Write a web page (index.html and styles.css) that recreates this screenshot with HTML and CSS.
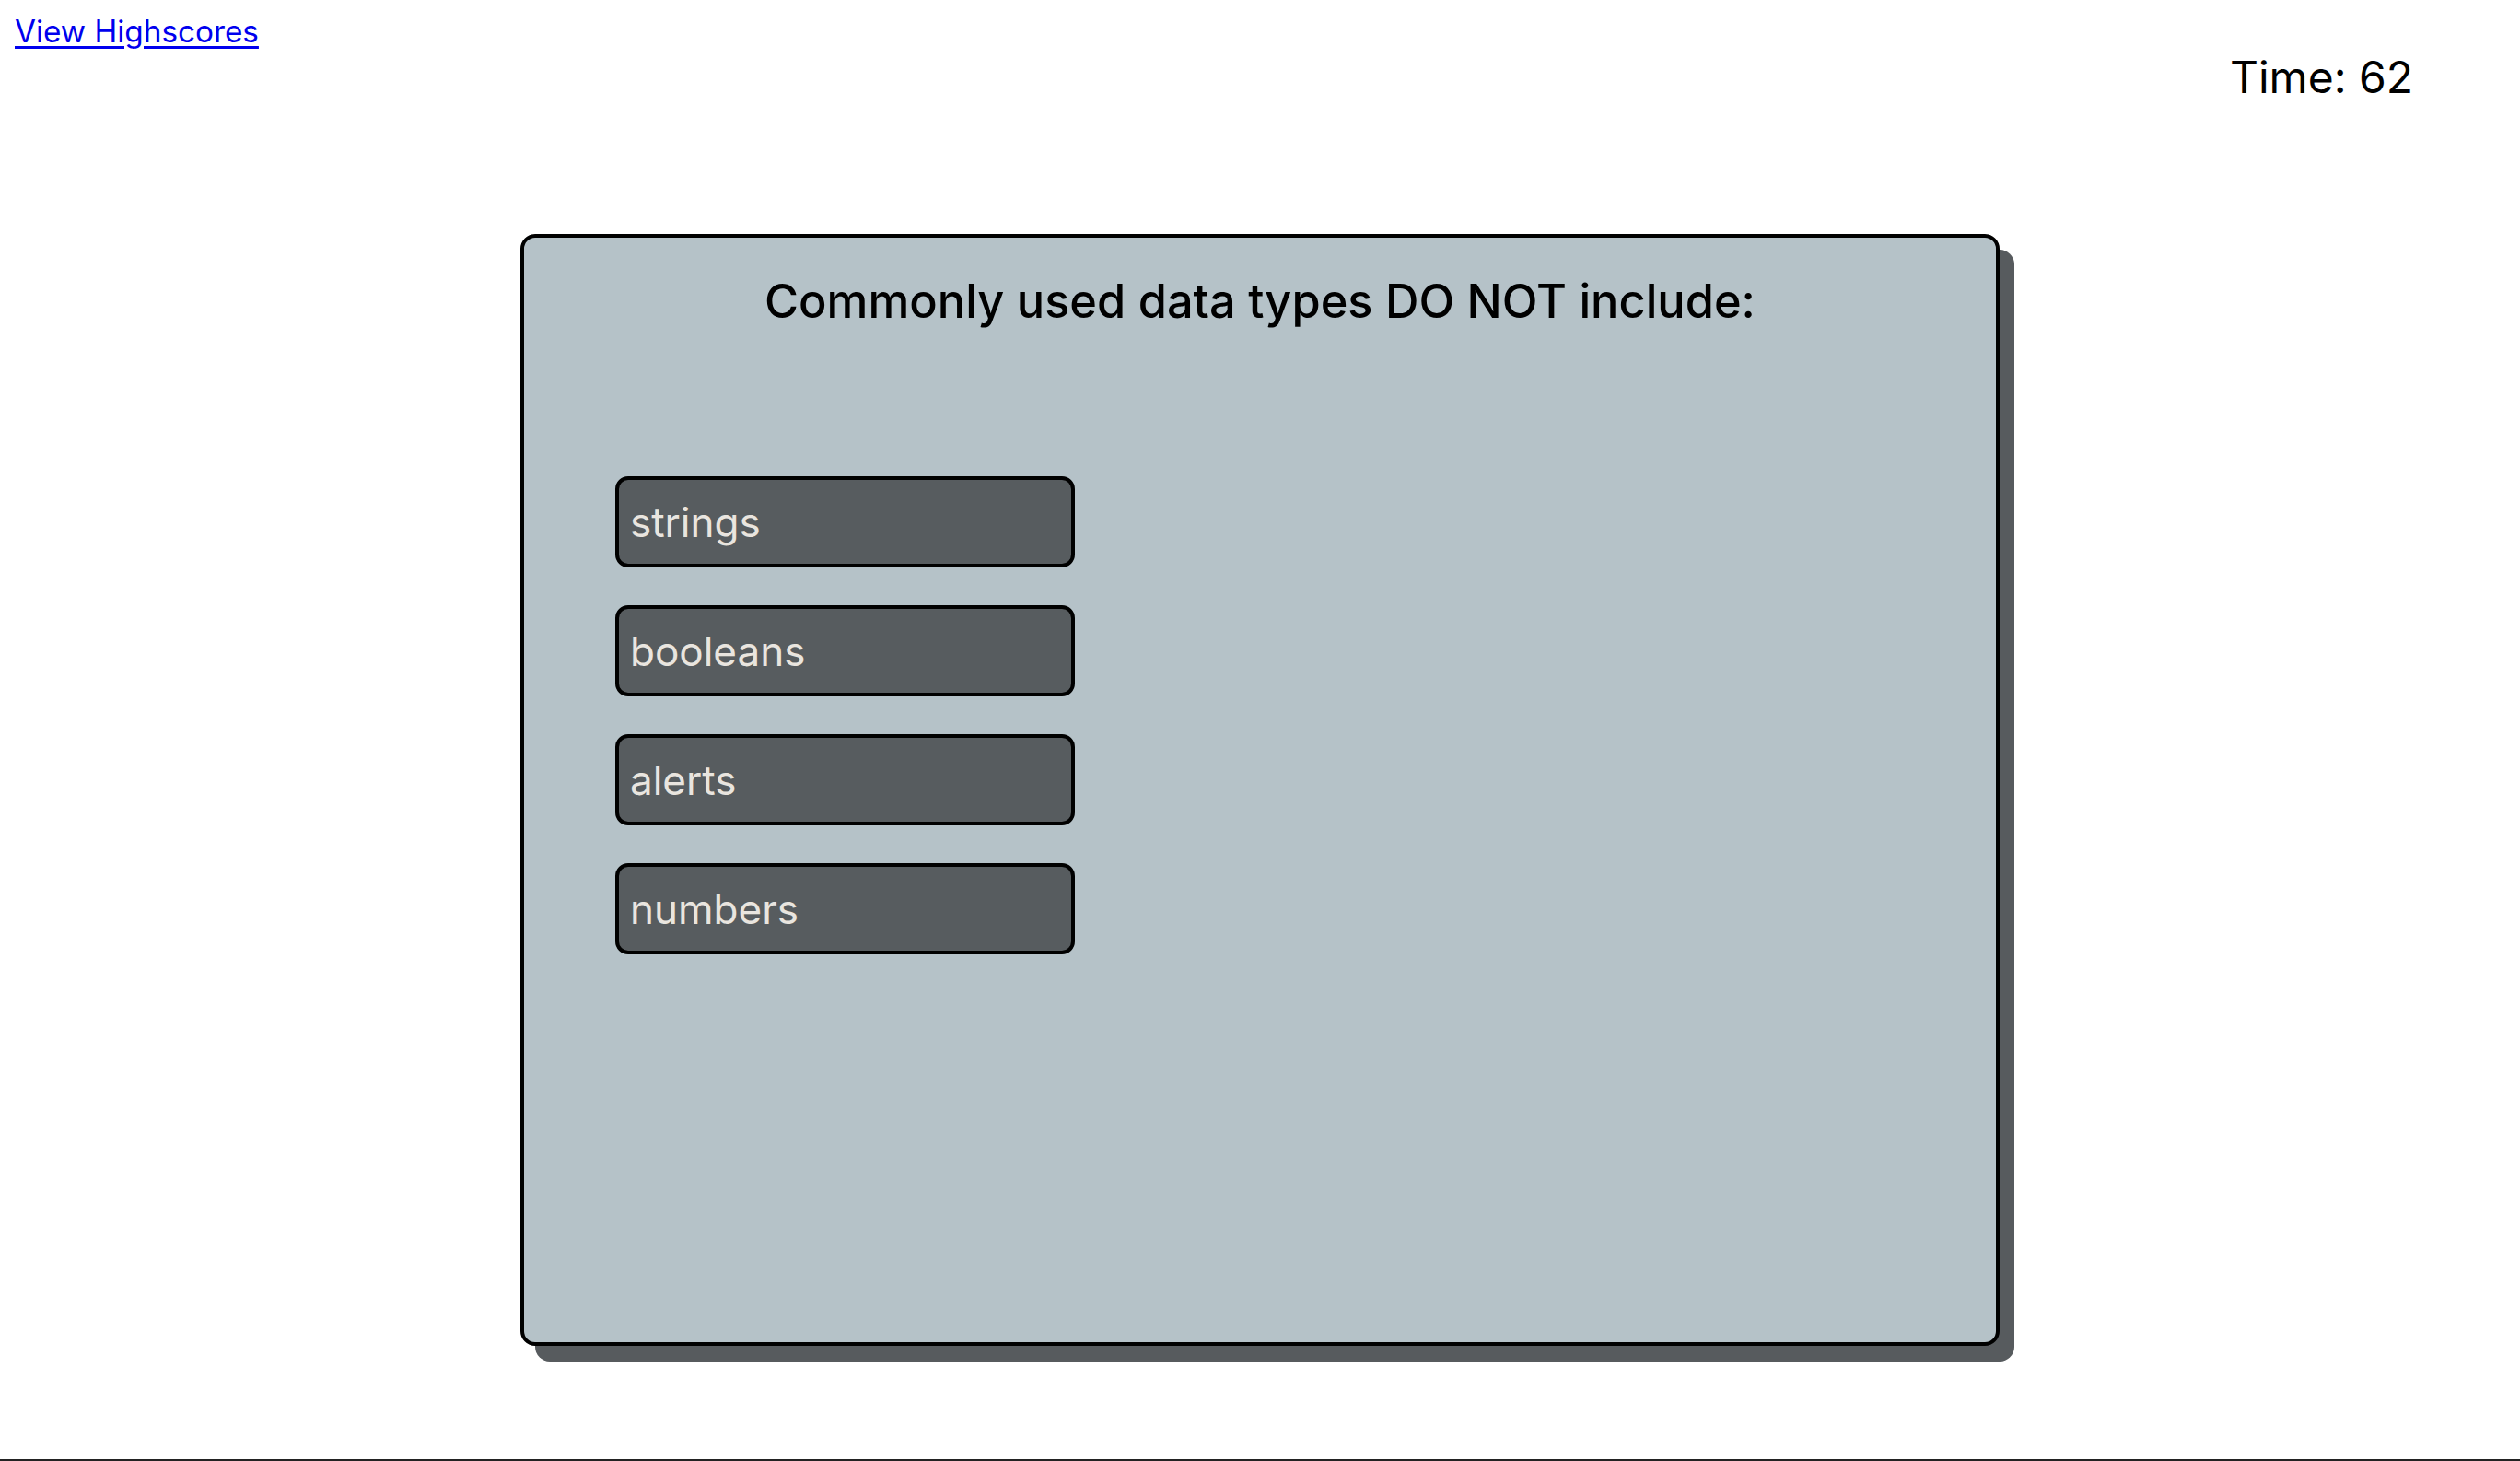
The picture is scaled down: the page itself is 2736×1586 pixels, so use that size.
FILE: index.html
```html
<!DOCTYPE html>
<html lang="en">
<head>
<meta charset="utf-8">
<title>Code Quiz</title>
<link rel="stylesheet" href="styles.css">
</head>
<body>
<div class="page">
  <header class="top">
    <a class="highscores" href="#">View Highscores</a>
    <div class="timer">Time: 62</div>
  </header>
  <main class="card">
    <h1 class="question">Commonly used data types DO NOT include:</h1>
    <div class="answers">
      <button class="answer">strings</button>
      <button class="answer">booleans</button>
      <button class="answer">alerts</button>
      <button class="answer">numbers</button>
    </div>
  </main>
</div>
</body>
</html>
```
FILE: styles.css
```css
html, body {
  margin: 0;
  padding: 0;
  background: #ffffff;
}

.page {
  box-sizing: border-box;
  height: 1586px;
  border-bottom: 2px solid #222222;
  font-family: Inter, "Noto Sans", "DejaVu Sans", sans-serif;
  color: #000000;
  overflow: hidden;
}

.top {
  display: flex;
  justify-content: space-between;
  align-items: flex-start;
  padding: 0 116px 0 16px;
  height: 254px;
}

.highscores {
  font-size: 33.3px;
  line-height: 40px;
  margin-top: 14px;
  color: #0000ee;
  text-decoration: underline;
  text-underline-offset: 4px;
}

.timer {
  font-size: 48px;
  line-height: 56px;
  margin-top: 56px;
}

.card {
  box-sizing: border-box;
  width: 1606px;
  height: 1207px;
  margin: 0 auto;
  background: #b5c2c8;
  border: 4px solid #000000;
  border-radius: 16px;
  box-shadow: 16px 17px 0 #575b5e;
  padding: 0 0 0 99px;
}

.question {
  margin: 39px 0 0 -99px;
  font-size: 50.5px;
  line-height: 60px;
  font-weight: 500;
  text-align: center;
}

.answers {
  display: flex;
  flex-direction: column;
  align-items: flex-start;
  gap: 41px;
  margin-top: 160px;
}

.answer {
  box-sizing: border-box;
  width: 499px;
  height: 99px;
  border: 4px solid #000000;
  border-radius: 14px;
  background: #575c5f;
  color: #e9e5df;
  font-family: Inter, "Noto Sans", "DejaVu Sans", sans-serif;
  font-size: 44px;
  text-align: left;
  padding: 0 12px;
}
```
